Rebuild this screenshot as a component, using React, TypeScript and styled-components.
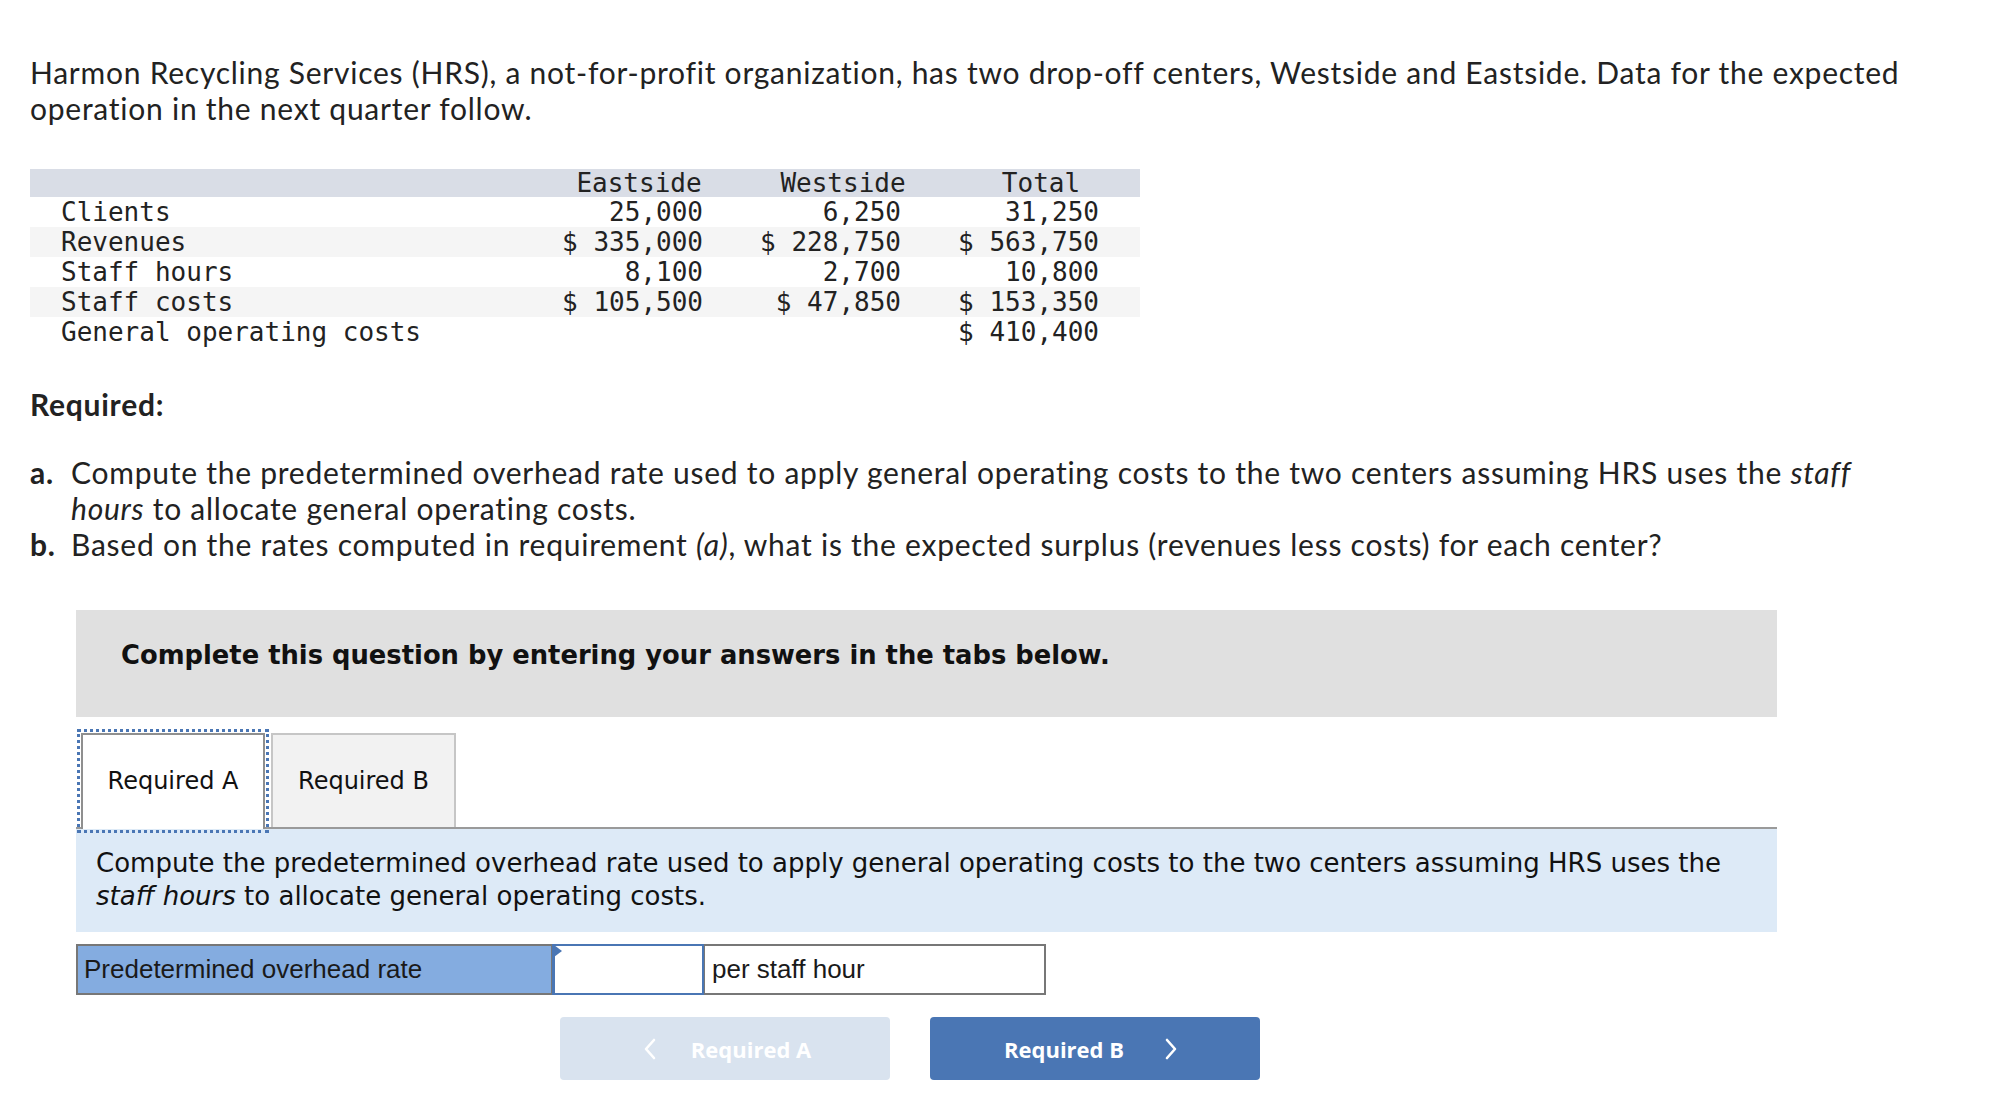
import React from 'react'
import styled, { createGlobalStyle } from 'styled-components'

const GlobalStyle = createGlobalStyle`
  html, body {
    margin: 0;
    padding: 0;
    background: #ffffff;
  }
  body {
    font-family: Lato, 'Open Sans', 'Liberation Sans', sans-serif;
    color: #222222;
  }
`

const Page = styled.div`
  padding: 54px 30px 0 30px;
`

const Intro = styled.p`
  margin: 0;
  font-size: 30px;
  letter-spacing: 0.75px;
  line-height: 36px;
  white-space: nowrap;
`

const DataTable = styled.div`
  margin-top: 43px;
  width: 1110px;
  font-family: 'DejaVu Sans Mono', monospace;
  font-size: 26px;
  color: #222222;
`

const TableRow = styled.div<{ $band?: 'head' | 'stripe' | 'none' }>`
  display: grid;
  grid-template-columns: 516px 198px 198px 198px;
  height: ${(p) => (p.$band === 'head' ? '28px' : '30px')};
  line-height: ${(p) => (p.$band === 'head' ? '28px' : '30px')};
  background: ${(p) =>
    p.$band === 'head' ? '#d9dde6' : p.$band === 'stripe' ? '#f5f5f5' : 'transparent'};
`

const LabelCell = styled.div`
  padding-left: 31px;
  white-space: pre;
`

const NumCell = styled.div`
  text-align: right;
  padding-right: 41px;
  white-space: pre;
`

const HeadCell = styled.div<{ $shift?: number }>`
  text-align: center;
  padding-right: ${(p) => p.$shift ?? 0}px;
`

const Heading = styled.div`
  margin-top: 39px;
  font-size: 30px;
  letter-spacing: 0.75px;
  line-height: 36px;
  font-weight: 700;
`

const ReqList = styled.div`
  margin-top: 32px;
  font-size: 30px;
  letter-spacing: 0.75px;
  line-height: 36px;
  white-space: nowrap;
`

const ReqItem = styled.div`
  display: grid;
  grid-template-columns: 41px 1fr;
`

const ReqMark = styled.span`
  font-weight: 700;
`

const Widget = styled.div`
  margin-left: 46px;
  width: 1701px;
  font-family: 'DejaVu Sans', Verdana, sans-serif;
`

const Banner = styled.div`
  margin-top: 48px;
  height: 107px;
  box-sizing: border-box;
  padding: 29px 45px 0;
  background: #e0e0e0;
  font-size: 25.8px;
  line-height: 32px;
  font-weight: 700;
  color: #111111;
  white-space: nowrap;
`

const TabRow = styled.div`
  margin-top: 16px;
  display: flex;
  align-items: flex-end;
  height: 94px;
  border-bottom: 2px solid #9a9a9a;
  padding-left: 5px;
`

const Tab = styled.div<{ $active?: boolean }>`
  box-sizing: border-box;
  height: ${(p) => (p.$active ? '96px' : '94px')};
  margin-bottom: ${(p) => (p.$active ? '-2px' : '0')};
  width: ${(p) => (p.$active ? '184px' : '185px')};
  margin-left: ${(p) => (p.$active ? '0' : '6px')};
  display: flex;
  align-items: center;
  justify-content: center;
  padding-bottom: ${(p) => (p.$active ? '2px' : '0')};
  background: ${(p) => (p.$active ? '#ffffff' : '#f2f2f2')};
  border: 2px solid ${(p) => (p.$active ? '#8f8f8f' : '#c6c6c6')};
  border-bottom: ${(p) => (p.$active ? 'none' : '0')};
  outline: ${(p) => (p.$active ? '3px dotted #4a76b4' : 'none')};
  outline-offset: 1px;
  font-size: 24px;
  color: #111111;
`

const Prompt = styled.div`
  box-sizing: border-box;
  height: 103px;
  padding: 18px 20px 0;
  background: #ddeaf7;
  font-size: 26px;
  line-height: 33px;
  color: #111111;
  white-space: nowrap;
`

const AnswerRow = styled.div`
  margin-top: 12px;
  display: flex;
  height: 51px;
  font-family: 'Liberation Sans', Arial, sans-serif;
  font-size: 26px;
  color: #1a1a1a;
`

const AnswerLabel = styled.div`
  box-sizing: border-box;
  width: 476px;
  display: flex;
  align-items: center;
  padding-left: 6px;
  background: #84ace0;
  border: 2px solid #777777;
  border-right: 1px solid #777777;
`

const AnswerInput = styled.div`
  box-sizing: border-box;
  width: 152px;
  background: #ffffff;
  border: 2px solid #4a76b4;
  border-left-width: 3px;
  position: relative;

  &::before {
    content: '';
    position: absolute;
    left: -1px;
    top: -1px;
    border-style: solid;
    border-width: 6px 0 6px 8px;
    border-color: transparent transparent transparent #4a76b4;
  }
`

const AnswerUnit = styled.div`
  box-sizing: border-box;
  width: 342px;
  display: flex;
  align-items: center;
  padding-left: 7px;
  background: #ffffff;
  border: 2px solid #777777;
  border-left: 1px solid #777777;
`

const NavRow = styled.div`
  margin-top: 22px;
  display: flex;
  gap: 40px;
  padding-left: 484px;
`

const NavButton = styled.div<{ $enabled?: boolean }>`
  width: 330px;
  height: 63px;
  border-radius: 4px;
  background: ${(p) => (p.$enabled ? '#4a76b4' : '#d9e3ef')};
  color: #ffffff;
  display: flex;
  align-items: center;
  justify-content: center;
  gap: ${(p) => (p.$enabled ? '40px' : '34px')};
  padding-left: ${(p) => (p.$enabled ? '0' : '4px')};
  padding-right: ${(p) => (p.$enabled ? '8px' : '0')};
  box-sizing: border-box;
  font-family: 'Open Sans', 'Liberation Sans', sans-serif;
  font-weight: 700;
  font-size: 22px;
`

const Chevron = ({ dir }: { dir: 'left' | 'right' }) => (
  <svg width="14" height="22" viewBox="0 0 14 22" fill="none">
    <polyline
      points={dir === 'right' ? '3,2 11,11 3,20' : '11,2 3,11 11,20'}
      stroke="#ffffff"
      strokeWidth="2.6"
      strokeLinecap="round"
      strokeLinejoin="round"
    />
  </svg>
)

const rows: { label: string; values: string[]; stripe: boolean }[] = [
  { label: 'Clients', values: ['25,000', '6,250', '31,250'], stripe: false },
  { label: 'Revenues', values: ['$ 335,000', '$ 228,750', '$ 563,750'], stripe: true },
  { label: 'Staff hours', values: ['8,100', '2,700', '10,800'], stripe: false },
  { label: 'Staff costs', values: ['$ 105,500', '$ 47,850', '$ 153,350'], stripe: true },
  { label: 'General operating costs', values: ['', '', '$ 410,400'], stripe: false }
]

export default function App() {
  return (
    <Page>
      <GlobalStyle />
      <Intro>
        Harmon Recycling Services (HRS), a not-for-profit organization, has two drop-off centers,
        Westside and Eastside. Data for the expected
        <br />
        operation in the next quarter follow.
      </Intro>

      <DataTable>
        <TableRow $band="head">
          <div />
          <HeadCell $shift={12}>Eastside</HeadCell>
          <HeadCell>Westside</HeadCell>
          <HeadCell>Total</HeadCell>
        </TableRow>
        {rows.map((r) => (
          <TableRow key={r.label} $band={r.stripe ? 'stripe' : 'none'}>
            <LabelCell>{r.label}</LabelCell>
            {r.values.map((v, i) => (
              <NumCell key={i}>{v}</NumCell>
            ))}
          </TableRow>
        ))}
      </DataTable>

      <Heading>Required:</Heading>
      <ReqList>
        <ReqItem>
          <ReqMark>a.</ReqMark>
          <span>
            Compute the predetermined overhead rate used to apply general operating costs to the two
            centers assuming HRS uses the <em>staff</em>
            <br />
            <em>hours</em> to allocate general operating costs.
          </span>
        </ReqItem>
        <ReqItem>
          <ReqMark>b.</ReqMark>
          <span>
            Based on the rates computed in requirement <em>(a)</em>, what is the expected surplus
            (revenues less costs) for each center?
          </span>
        </ReqItem>
      </ReqList>

      <Widget>
        <Banner>Complete this question by entering your answers in the tabs below.</Banner>
        <TabRow>
          <Tab $active>Required A</Tab>
          <Tab>Required B</Tab>
        </TabRow>
        <Prompt>
          Compute the predetermined overhead rate used to apply general operating costs to the two
          centers assuming HRS uses the
          <br />
          <em>staff hours</em> to allocate general operating costs.
        </Prompt>
        <AnswerRow>
          <AnswerLabel>Predetermined overhead rate</AnswerLabel>
          <AnswerInput />
          <AnswerUnit>per staff hour</AnswerUnit>
        </AnswerRow>
        <NavRow>
          <NavButton>
            <Chevron dir="left" />
            <span>Required A</span>
          </NavButton>
          <NavButton $enabled>
            <span>Required B</span>
            <Chevron dir="right" />
          </NavButton>
        </NavRow>
      </Widget>
    </Page>
  )
}
